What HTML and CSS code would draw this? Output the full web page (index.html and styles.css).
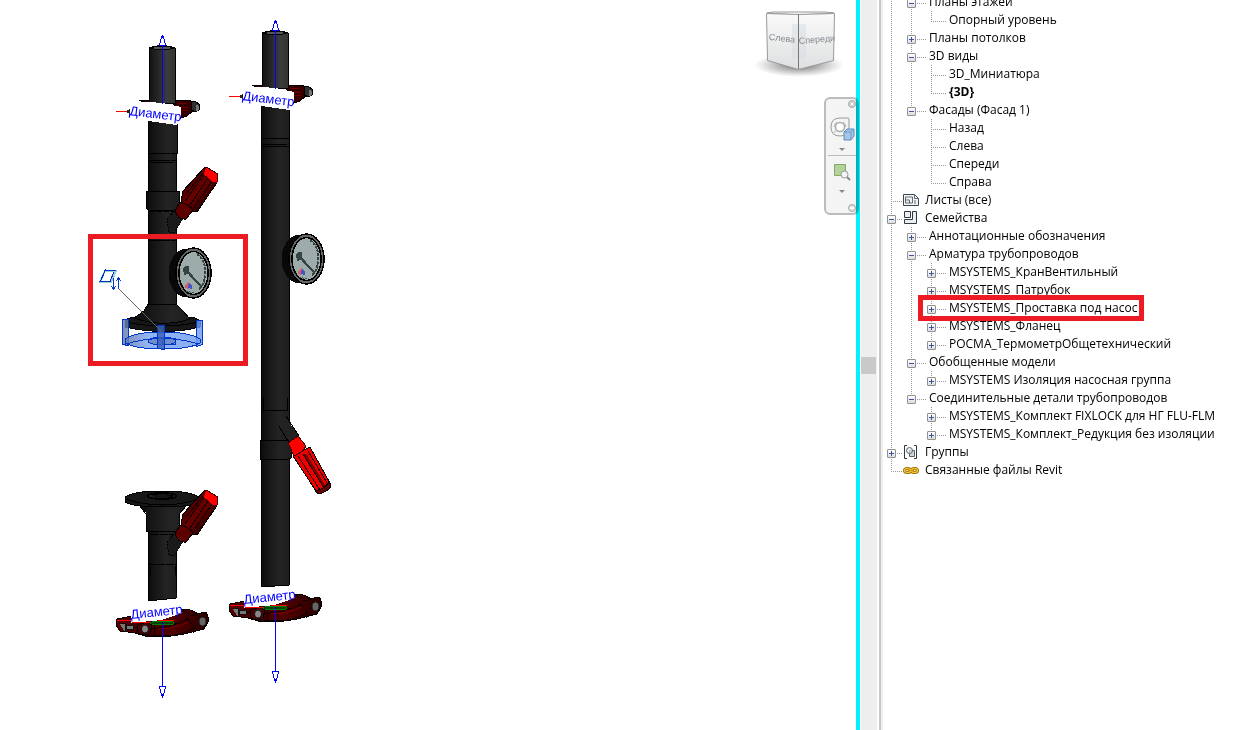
FILE: index.html
```html
<!DOCTYPE html>
<html lang="ru">
<head>
<meta charset="utf-8">
<title>Диспетчер проекта</title>
<link rel="stylesheet" href="styles.css">
</head>
<body>
<div class="app">
  <main class="viewport">
    <svg class="model" width="856" height="730" viewBox="0 0 856 730" role="img" aria-label="Насосная группа">
      <defs>
        <linearGradient id="pipe"><stop offset="0" stop-color="#0b0b0b"/><stop offset=".2" stop-color="#141414"/><stop offset=".65" stop-color="#242424"/><stop offset="1" stop-color="#1e1e1e"/></linearGradient>
        <linearGradient id="tip"><stop offset="0" stop-color="#111"/><stop offset=".7" stop-color="#3c3c3c"/><stop offset="1" stop-color="#343434"/></linearGradient>
        <linearGradient id="grip" x1="0" y1="0" x2="1" y2="1"><stop offset="0" stop-color="#260000"/><stop offset=".5" stop-color="#6a0000"/><stop offset=".7" stop-color="#360000"/><stop offset="1" stop-color="#700000"/></linearGradient>
        <linearGradient id="clampFill"><stop offset="0" stop-color="#600000"/><stop offset=".3" stop-color="#3a0000"/><stop offset=".6" stop-color="#500000"/><stop offset="1" stop-color="#2a0000"/></linearGradient>
        <linearGradient id="glass"><stop offset="0" stop-color="#6478a8"/><stop offset=".3" stop-color="#7ba5f5"/><stop offset="1" stop-color="#6f9bf0"/></linearGradient>
        <g id="topClamp">
          <path d="M139 100h12v4h-5zM172 100l16 0 10 4 2 4-6 2-7 6-9 3z" fill="#360000" stroke="#000"/>
          <path d="M178 103l9 1M180 107l8 1M181 111l7-1" stroke="#700000"/>
          <path d="M191 102l4-1 4 3 1 5-4 3-5-2z" fill="#303030" stroke="#000"/>
          <path d="M196 105l3 1v4l-3 1z" fill="#777"/>
          <path d="M149 48q13-5 26 0v56l-26-1z" fill="url(#tip)" stroke="#000"/>
          <path d="M150 48q13-4 24 0-12 4-24 0z" fill="#555" stroke="#000"/>
          <path d="M130 103l19-1 14 1 18 4v9l-4 9-29-4-18-4z" fill="#fff"/>
          <path d="M116 111.500h13" stroke="#f00"/><path d="M127 110l3-1v5l-3-1z" fill="#222"/>
          <path d="M162.500 46v58M159.500 45.500h6l-2-9h-2zM162.500 35v3" fill="none" stroke="#00f"/>
          <text class="dimension" transform="translate(129 115) rotate(7)">Диаметр</text>
        </g>
        <g id="bottomClamp">
          <path d="M117 619l15-3 50-7q10 0 16 5l7-2q4 1 3 10l-4 7-12 3q-15 5-43 5l-14-4-15-2-4-6z" fill="url(#clampFill)" stroke="#000"/>
          <path d="M133 627q24 6 56-8M151 635q25 4 45-8M154 623v13M185 617l8 8v8M182 610l10 6 6-2" fill="none" stroke="#100000"/>
          <path d="M158 629q18 0 30-7" fill="none" stroke="#7a0000"/>
          <path d="M119 623h6v9M126 625h7v4h-7z" fill="#777" stroke="#111"/>
          <path d="M138 625l9-3 5 3-2 9-9 1-4-4z" fill="#480000" stroke="#000"/>
          <ellipse class="smooth" cx="145" cy="629" rx="3.500" ry="4" fill="#888" stroke="#111"/>
          <ellipse class="smooth" cx="202.500" cy="621.500" rx="3.500" ry="4.500" fill="#666" stroke="#111"/>
          <path d="M131 610l49-5 2 8-20 7-31 3z" fill="#fff"/>
          <path d="M117 620.500h14M132 622.500h18M158 620.500h16" stroke="#f00"/>
          <ellipse cx="162" cy="623" rx="12" ry="2" fill="#084008" stroke="#008000"/>
          <path d="M162.500 622v65M159.500 686.500h6l-2 9h-2zM162.500 694v4" fill="none" stroke="#00f"/>
          <text class="dimension" transform="translate(131 619) rotate(-6)">Диаметр</text>
        </g>
        <g id="handle">
          <path d="M167 220l8-11 8 9-9 15-5-1z" fill="#1a1a1a" stroke="#000" stroke-dasharray="2 1"/>
          <path d="M181 201l2-10 22-24 13 9-2 8-19 28-6-1z" fill="url(#grip)" stroke="#000"/>
          <path d="M175 211l5-9q9 2 13 8l-7 9q-8 1-11-8z" fill="#5c0000" stroke="#000"/>
          <path d="M185 201l19-27M190 205l18-27M193 209l19-28M186 194l17-21" stroke="#160000" fill="none"/>
          <path d="M206 167l12 7-1 8-4 1-10-9z" fill="#f00" stroke="#400000"/>
        </g>
        <g id="gauge">
          <ellipse cx="186" cy="273" rx="17.500" ry="24" fill="#080808"/>
          <path d="M186 249l8-1v50l-8-1z" fill="#111"/>
          <ellipse cx="193.500" cy="273" rx="17.500" ry="25" fill="#686565" stroke="#000" stroke-width="1.500"/>
          <ellipse cx="193.500" cy="273" rx="14.500" ry="21.500" fill="#9eabab" stroke="#000" stroke-width="1.500"/>
          <path d="M197 254q9 6 8 20t-7 15" fill="none" stroke="#344344" stroke-width="2" stroke-dasharray="3 1"/>
          <path d="M183 268l3-2h3v5l9 11-1 1-9-9-4 1z" fill="#344344"/>
          <path d="M190 275l12 12" stroke="#344344" stroke-width="1.500"/>
          <path d="M185 285l4-3 2 3-2 4-4-1z" fill="#d06064"/><path d="M189 283l3 2v4l-4-1z" fill="#4055cc"/>
          <path d="M186 291l8 2" stroke="#405052" stroke-dasharray="2 1"/>
        </g>
      </defs>

      <g class="pixel">
        <path d="M148 118h29v35h-1v152h-28z" fill="url(#pipe)" stroke="#000"/>
        <path d="M148 153h28M148 160h28M151 162h24M148 240h28M151 304h24" stroke="#000" stroke-dasharray="22 1"/>
        <path d="M146 191h33v18l-3 1h-28l-2-2z" fill="url(#pipe)" stroke="#000"/>
        <path d="M150 211h25" stroke="#000" stroke-dasharray="5 2"/>
        <use href="#handle"/>
        <path d="M125 321q2-4 14-4h46q12 0 15 4v6q-35 9-75 0z" fill="#171717" stroke="#000"/>
        <path d="M148 304h28l6 6 8 9q-28 9-56-1l10-7z" fill="url(#pipe)" stroke="#000"/>
        <path d="M126 322q37 8 73 0" fill="none" stroke="#000"/>
        <use href="#gauge"/>
        <g fill="url(#glass)" fill-opacity=".82" stroke="#0037c8">
          <path d="M122.500 319.500h6v26l-6-1zM196.500 320.500h6v24l-6 2z"/>
          <path d="M125 339q10-7 37-7t38 7v4q-10 6-37 6t-38-6z"/>
          <ellipse cx="162" cy="341" rx="14" ry="4" fill="#5067a0" fill-opacity=".5"/>
          <path d="M126 344q36-11 73 0M162 338h13v6h-13z" fill="none"/>
          <path d="M157.500 325.500h7v24l-7-1z" fill="#3c60ba"/>
        </g>
        <use href="#topClamp"/>
        <use href="#bottomClamp"/>

        <path d="M148 510h28v88l-28 3z" fill="url(#pipe)" stroke="#000"/>
        <path d="M148 564h28M150 566v10M175 566v10M151 534h24" stroke="#000" stroke-dasharray="8 1"/>
        <path d="M146 514h33v17h-33zM139 505h48l-8 8v3h-33v-3z" fill="url(#pipe)"/>
        <path d="M139 505l7 9v17h33v-17l8-9" stroke="#000" fill="none"/>
        <path d="M125 497q9-6 37-6t37 6v5q-9 5-37 5t-37-5z" fill="#171717" stroke="#000"/>
        <path d="M125 499q38 12 74 0" fill="none" stroke="#000"/>
        <ellipse cx="162" cy="496" rx="14" ry="3" fill="#222" stroke="#000" stroke-width="1.500"/>
        <path d="M153 495l9-2 11 3-5 2h-12z" fill="#141414" stroke="#000"/>
        <use href="#handle" y="323"/>

        <path d="M261 104h28v481l-28 2z" fill="url(#pipe)" stroke="#000"/>
        <path d="M261 138h28M263 144h24M261 146h28M262 410h26M263 398v12M287 398v12" stroke="#000"/>
        <path d="M280 419l6-1 13 18-10 7-8-13z" fill="#222"/>
        <path d="M279 426l10 17M286 416l13 20" stroke="#000"/>
        <path d="M260 440h28l3 5v13l-3 1h-28z" fill="url(#pipe)" stroke="#000"/>
        <path d="M293 456l17-9 21 38q-3 7-13 9z" fill="#ee0000" stroke="#000"/>
        <path d="M288 443l10-7 8 10q-4 7-12 10z" fill="#f00" stroke="#400000"/>
        <path d="M305 454l19 32" stroke="#800000" stroke-width="3"/>
        <path d="M298 456l22 34M303 454l21 34M308 451l19 32" stroke="#200000" fill="none"/>
        <path d="M315 491q10-2 14-9l2 4q-3 6-13 8z" fill="#680000" stroke="#000"/>
        <use href="#gauge" x="113" y="-14"/>
        <use href="#topClamp" x="113" y="-15"/>
        <use href="#bottomClamp" x="113" y="-15"/>
        <path d="M105 271h11l-5 11h-11z" fill="#fff" stroke="#9ecfd2" stroke-width="2"/>
        <path d="M104 270.500h12M99 281.500h12M106 269l-6 13M114 272l-4 9M113.500 278v10M111 286l2.500 3 2.500-3M118.500 289v-10M116 281l2.500-3 2.500 3" fill="none" stroke="#0037c8"/>
        <path d="M119 289l43 43" stroke="#666"/>
        <rect x="90.500" y="236.500" width="155" height="127" fill="none" stroke="#ed1c24" stroke-width="5"/>
      </g>
    </svg>

    <svg class="viewcube" width="96" height="72" viewBox="0 0 96 72" role="img" aria-label="Видовой куб">
      <defs>
        <radialGradient id="shade"><stop offset=".3" stop-color="#777" stop-opacity=".75"/><stop offset="1" stop-color="#999" stop-opacity="0"/></radialGradient>
        <linearGradient id="face" x2="0" y2="1"><stop offset="0" stop-color="#fafafa"/><stop offset="1" stop-color="#dedfe0"/></linearGradient>
      </defs>
      <ellipse cx="47" cy="56" rx="45" ry="12" fill="url(#shade)"/>
      <path d="M15 4l6-1h52l9 1-35 2z" fill="#f7f7f7" stroke="#999"/>
      <path d="M14.500 4.500l32 1v55l-31-9z" fill="url(#face)" stroke="#999"/>
      <path d="M46.500 5.500l36-1-1 47-35 9z" fill="url(#face)" stroke="#999"/>
      <path d="M40 15h14v35H40z" fill="#d8dde1" opacity=".5"/>
      <path d="M46.500 5v55" stroke="#777"/>
      <text class="face-name" transform="translate(30 30) rotate(7)">Слева</text>
      <text class="face-name" transform="translate(65 31) rotate(-5)">Спереди</text>
    </svg>

    <nav class="navbar" aria-label="Навигация">
      <button class="mini" aria-label="Закрыть"><svg width="8" height="8" viewBox="0 0 8 8"><circle cx="4" cy="4" r="3.500" fill="#ccc" stroke="#aaa"/><path d="M2.500 2.500l3 3m0-3l-3 3" stroke="#fff"/></svg></button>
      <button class="tool" aria-label="Штурвал"><svg width="26" height="26" viewBox="0 0 26 26"><path d="M11 2h8q1 0 1 1v8q0 9-9 9t-9-9 9-9z" fill="#f4f4f4" stroke="#9a9a9a"/><circle cx="11" cy="11" r="4.500" fill="#fff" stroke="#aaa" stroke-width="1.500"/><path d="M5 11a6 6 0 0 1 3-5M14 6a6 6 0 0 1 3 5M6 15l2-1M4 18l4-5" fill="none" stroke="#bbb"/><path d="M15 16l3-3h7v7l-3 4h-7z" fill="#a5c6e8" stroke="#5b8cbc"/><path d="M15 16h7v8M22 16l3-3" fill="none" stroke="#6f9ac5"/></svg></button>
      <button class="drop" aria-label="Виды штурвала"><svg width="6" height="4" viewBox="0 0 6 4"><path d="M0 0h6L3 3z" fill="#888"/></svg></button>
      <hr class="divider">
      <button class="tool" aria-label="Область увеличения"><svg width="26" height="20" viewBox="0 0 26 20"><path d="M5.500 .500h11v11h-11z" fill="#b5d19c" stroke="#82aa69"/><circle cx="15.500" cy="10.500" r="3.500" fill="#f2f6fa" stroke="#999"/><path d="M18 13l3 3" stroke="#888" stroke-width="2"/></svg></button>
      <button class="drop" aria-label="Режимы увеличения"><svg width="6" height="4" viewBox="0 0 6 4"><path d="M0 0h6L3 3z" fill="#888"/></svg></button>
      <button class="mini last" aria-label="Настроить"><svg width="8" height="8" viewBox="0 0 8 8"><circle cx="4" cy="4" r="3.500" fill="#ddd" stroke="#aaa"/><path d="M2 4h4" stroke="#fff" stroke-width="2"/></svg></button>
    </nav>
  </main>

  <div class="scrollbar"><div class="thumb"></div></div>
  <div class="splitter"></div>

  <aside class="browser">
    <ul class="tree">
      <li>
        <ul>
          <li><div class="row"><button class="toggle minus" aria-label="Свернуть"></button><span>Планы этажей</span></div>
            <ul><li><div class="row leaf"><span>Опорный уровень</span></div></li></ul>
          </li>
          <li><div class="row"><button class="toggle" aria-label="Развернуть"></button><span>Планы потолков</span></div></li>
          <li><div class="row"><button class="toggle minus" aria-label="Свернуть"></button><span>3D виды</span></div>
            <ul>
              <li><div class="row leaf"><span>3D_Миниатюра</span></div></li>
              <li><div class="row leaf"><strong>{3D}</strong></div></li>
            </ul>
          </li>
          <li><div class="row"><button class="toggle minus" aria-label="Свернуть"></button><span>Фасады (Фасад 1)</span></div>
            <ul>
              <li><div class="row leaf"><span>Назад</span></div></li>
              <li><div class="row leaf"><span>Слева</span></div></li>
              <li><div class="row leaf"><span>Спереди</span></div></li>
              <li><div class="row leaf"><span>Справа</span></div></li>
            </ul>
          </li>
        </ul>
      </li>
      <li><div class="row leaf root"><svg width="16" height="14" viewBox="0 0 16 14"><path d="M.5 1.500h11l4 4v7H.5z" fill="#f2f4f6" stroke="#3d4650"/><path d="M11.500 1.500v4h4M2.500 4h7v6h-7zM2.500 7h4v3M12 7v4" fill="none" stroke="#5f6b77"/></svg><span>Листы (все)</span></div></li>
      <li><div class="row root"><button class="toggle minus" aria-label="Свернуть"></button><svg width="16" height="14" viewBox="0 0 16 14"><path d="M1.500 .500h6v6h-6zM9.500 .500h4v12h-12v-4h8z" fill="#eceff2" stroke="#303840"/></svg><span>Семейства</span></div>
        <ul>
          <li><div class="row"><button class="toggle" aria-label="Развернуть"></button><span>Аннотационные обозначения</span></div></li>
          <li><div class="row"><button class="toggle minus" aria-label="Свернуть"></button><span>Арматура трубопроводов</span></div>
            <ul>
              <li><div class="row"><button class="toggle" aria-label="Развернуть"></button><span>MSYSTEMS_КранВентильный</span></div></li>
              <li><div class="row"><button class="toggle" aria-label="Развернуть"></button><span>MSYSTEMS_Патрубок</span></div></li>
              <li><div class="row marked"><button class="toggle" aria-label="Развернуть"></button><span>MSYSTEMS_Проставка под насос</span></div></li>
              <li><div class="row"><button class="toggle" aria-label="Развернуть"></button><span>MSYSTEMS_Фланец</span></div></li>
              <li><div class="row"><button class="toggle" aria-label="Развернуть"></button><span>РОСМА_ТермометрОбщетехнический</span></div></li>
            </ul>
          </li>
          <li><div class="row"><button class="toggle minus" aria-label="Свернуть"></button><span>Обобщенные модели</span></div>
            <ul><li><div class="row"><button class="toggle" aria-label="Развернуть"></button><span>MSYSTEMS Изоляция насосная группа</span></div></li></ul>
          </li>
          <li><div class="row"><button class="toggle minus" aria-label="Свернуть"></button><span>Соединительные детали трубопроводов</span></div>
            <ul>
              <li><div class="row"><button class="toggle" aria-label="Развернуть"></button><span>MSYSTEMS_Комплект FIXLOCK для НГ FLU-FLM</span></div></li>
              <li><div class="row"><button class="toggle" aria-label="Развернуть"></button><span>MSYSTEMS_Комплект_Редукция без изоляции</span></div></li>
            </ul>
          </li>
        </ul>
      </li>
      <li><div class="row root"><button class="toggle" aria-label="Развернуть"></button><svg width="16" height="14" viewBox="0 0 16 14"><path d="M4 .500H1.500v13H4M11 .500h2.500v13H11" fill="none" stroke="#303840"/><path d="M6.500 5.500h5v6h-5z" fill="#ccd3d9" stroke="#59636d"/><circle cx="6.500" cy="5.500" r="3" fill="#e3e7ea" fill-opacity=".7" stroke="#59636d"/></svg><span>Группы</span></div></li>
      <li><div class="row leaf root"><svg width="16" height="14" viewBox="0 0 16 14"><ellipse cx="4.500" cy="7.500" rx="3" ry="2" fill="none" stroke="#8a6200" stroke-width="3"/><ellipse cx="11.500" cy="7.500" rx="3" ry="2" fill="none" stroke="#8a6200" stroke-width="3"/><ellipse cx="4.500" cy="7.500" rx="3" ry="2" fill="none" stroke="#f5c32c" stroke-width="1.500"/><ellipse cx="11.500" cy="7.500" rx="3" ry="2" fill="none" stroke="#f5c32c" stroke-width="1.500"/><path d="M5 7.500h6" stroke="#c99212"/></svg><span>Связанные файлы Revit</span></div></li>
    </ul>
  </aside>
</div>
</body>
</html>
```

FILE: styles.css
```css
* { box-sizing: border-box; }

body {
  margin: 0;
  background: #fff;
  color: #000;
  font: 12px/18px "Open Sans", "Noto Sans", sans-serif;
}

button {
  padding: 0;
  border: 0;
  background: none;
}

.app {
  display: grid;
  grid-template-columns: minmax(0, 1fr) auto auto 356px;
  height: 100vh;
  overflow: hidden;
}

/* Drawing area */
.viewport {
  position: relative;
  border-right: 4px solid #00f2ff;
}

.model {
  display: block;
  max-width: 100%;
}

.pixel { shape-rendering: crispEdges; }
.smooth { shape-rendering: geometricPrecision; }

.dimension {
  font: 13px "Liberation Sans", sans-serif;
  fill: #00f;
}

.viewcube {
  position: absolute;
  top: 9px;
  right: 8px;
}

.face-name {
  font: 9px "Liberation Sans", sans-serif;
  fill: #858b90;
  text-anchor: middle;
  dominant-baseline: middle;
}

.navbar {
  position: absolute;
  top: 97px;
  right: -3px;
  display: flex;
  flex-direction: column;
  align-items: center;
  width: 35px;
  height: 118px;
  padding: 0 0 1px 2px;
  border: 2px solid #bcbcbc;
  border-right-width: 3px;
  border-radius: 6px;
  background: #f4f4f4;
  mix-blend-mode: multiply;
}

.navbar svg { display: block; }

.mini { align-self: flex-end; margin-top: 1px; }
.mini.last { margin-top: auto; }
.tool { margin-top: 8px; }
.drop { margin-top: 6px; }

.divider {
  width: 100%;
  margin: 3px 0 0;
  border: 0;
  border-top: 1px solid #bbb;
}

/* Scroll column and pane splitter */
.scrollbar {
  width: 16px;
  margin-left: 1px;
  padding-top: 357px;
  background: #eee;
}

.thumb {
  width: 15px;
  height: 17px;
  background: #c9c9c9;
}

.splitter {
  width: 4px;
  margin-left: 2px;
  border-left: 2px solid #c8c8c8;
  border-right: 2px solid #eee;
}

/* Project browser */
.browser {
  padding-left: 4px;
  overflow: hidden;
}

.tree, .tree ul {
  margin: 0;
  padding: 0;
  list-style: none;
}

.tree { margin-top: -7px; }
.tree ul { margin-left: 20px; }

.tree li {
  background: repeating-linear-gradient(#999 0 1px, transparent 1px 2px) 4px 0 / 1px 100% no-repeat;
}

.tree li:last-child { background-size: 1px 10px; }

.row {
  position: relative;
  display: flex;
  align-items: center;
  width: fit-content;
  height: 18px;
  white-space: nowrap;
  background: repeating-linear-gradient(90deg, #999 0 1px, transparent 1px 2px) 10px 10px / 9px 1px no-repeat;
}

.row.leaf {
  padding-left: 22px;
  background-position: 4px 10px;
  background-size: 15px 1px;
}

.row.root { background-size: 5px 1px; }
.row.root svg { margin: 0 6px 0 7px; }

.row.leaf.root {
  padding-left: 9px;
  background-size: 11px 1px;
}

.toggle {
  width: 9px;
  height: 9px;
  margin: 3px 13px 0 0;
  border: 1px solid #919191;
  border-radius: 1px;
  background:
    linear-gradient(#3c54a0, #3c54a0) center / 5px 1px no-repeat,
    linear-gradient(#3c54a0, #3c54a0) center / 1px 5px no-repeat,
    linear-gradient(#fff, #ddd);
}

.toggle.minus {
  background:
    linear-gradient(#3c54a0, #3c54a0) center / 5px 1px no-repeat,
    linear-gradient(#fff, #ddd);
}

.row.root .toggle { margin-right: 0; }

/* Frame drawn around the family being pointed out */
.marked::after {
  content: "";
  position: absolute;
  z-index: 1;
  inset: -4px -7px -4px -9px;
  border: 5px solid #ed1c24;
}
```
